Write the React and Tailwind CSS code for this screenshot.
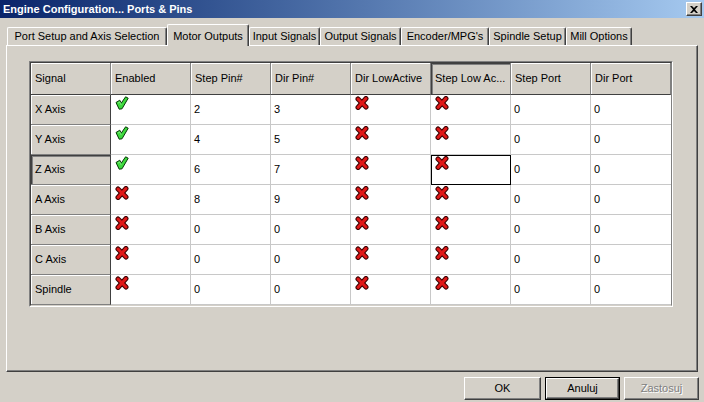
import React from "react";

const Check = () => (
  <svg width="14" height="14" viewBox="0 0 14 14">
    <path d="M1 6.5 L4.8 4.2 L6.2 7.2 L10.6 0.8 L13.2 2.2 L7 12.8 L4.2 13.2 Z" fill="#3cd83c" stroke="#063806" strokeWidth="1" strokeLinejoin="round" />
    <path d="M3 7 L5 6 L6.2 9" fill="none" stroke="#8cf08c" strokeWidth="0.8" />
  </svg>
);

const Cross = () => (
  <svg width="14" height="14" viewBox="0 0 14 14">
    <g strokeLinecap="round">
      <line x1="3" y1="3" x2="11" y2="11" stroke="#3a0000" strokeWidth="5" />
      <line x1="11" y1="2.5" x2="3" y2="11.5" stroke="#3a0000" strokeWidth="5" />
      <line x1="3" y1="3" x2="11" y2="11" stroke="#e01818" strokeWidth="3" />
      <line x1="11" y1="2.5" x2="3" y2="11.5" stroke="#e01818" strokeWidth="3" />
    </g>
  </svg>
);

const headers = ["Signal", "Enabled", "Step Pin#", "Dir Pin#", "Dir LowActive", "Step Low Ac...", "Step Port", "Dir Port"];

const rows = [
  ["X Axis", true, "2", "3"],
  ["Y Axis", true, "4", "5"],
  ["Z Axis", true, "6", "7"],
  ["A Axis", false, "8", "9"],
  ["B Axis", false, "0", "0"],
  ["C Axis", false, "0", "0"],
  ["Spindle", false, "0", "0"],
];

const tabs = [
  ["Port Setup and Axis Selection", "w-[160px]"],
  ["Motor Outputs", "w-[82px]"],
  ["Input Signals", "w-[71px]"],
  ["Output Signals", "w-[81px]"],
  ["Encoder/MPG's", "w-[88px]"],
  ["Spindle Setup", "w-[77px]"],
  ["Mill Options", "w-[66px]"],
];

function Btn({ children, def, disabled, w }) {
  const inner = (
    <div
      className={`h-full flex items-center justify-center bg-[#d4d0c8] border border-t-white border-l-white border-r-[#404040] border-b-[#404040] shadow-[inset_-1px_-1px_0_#808080] ${
        disabled ? "text-[#808080] [text-shadow:1px_1px_0_#fff]" : "text-black"
      }`}
    >
      {children}
    </div>
  );
  return <div className={`${w} h-[23px] ${def ? "border border-black" : ""}`}>{inner}</div>;
}

export default function App() {
  return (
    <div className="w-[704px] h-[402px] bg-[#d4d0c8] flex flex-col overflow-hidden font-['Liberation_Sans',Arial,sans-serif] text-[11px] text-black">
      {/* title bar */}
      <div className="h-[18px] flex items-center justify-between pl-[3px] pr-[2px] bg-linear-to-r from-[#0a246a] to-[#a6caf0]">
        <span className="text-white font-bold text-[11px] leading-none">Engine Configuration... Ports &amp; Pins</span>
        <div className="w-[16px] h-[14px] bg-[#d4d0c8] border border-t-white border-l-white border-r-[#404040] border-b-[#404040] shadow-[inset_-1px_-1px_0_#808080] flex items-center justify-center">
          <svg width="8" height="7" viewBox="0 0 8 7">
            <path d="M0 0 L2 0 L4 2 L6 0 L8 0 L5 3.5 L8 7 L6 7 L4 5 L2 7 L0 7 L3 3.5 Z" fill="#000" />
          </svg>
        </div>
      </div>

      {/* tabs */}
      <div className="mt-[6px] pl-[7px] flex items-end h-[21px]">
        {tabs.map(([t, w], i) =>
          i === 1 ? (
            <div
              key={t}
              className={`${w} h-[22px] -mb-px relative z-10 bg-[#d4d0c8] border-t border-l border-white border-r border-r-[#404040] shadow-[inset_-1px_0_0_#808080] rounded-tl-[2px] rounded-tr-[2px] flex items-start justify-center pt-[3px] whitespace-nowrap`}
            >
              {t}
            </div>
          ) : (
            <div
              key={t}
              className={`${w} h-[18px] bg-[#d4d0c8] border-t border-l border-white border-r border-r-[#404040] shadow-[inset_-1px_0_0_#808080] rounded-tl-[2px] rounded-tr-[2px] flex items-center justify-center whitespace-nowrap`}
            >
              {t}
            </div>
          )
        )}
      </div>

      {/* panel */}
      <div className="mx-[6px] h-[327px] border border-t-white border-l-white border-r-[#404040] border-b-[#404040] shadow-[inset_-1px_-1px_0_#808080] pl-[22px] pt-[15px]">
        <div className="w-fit border border-t-[#808080] border-l-[#808080] border-r-white border-b-white">
          <div className="border border-t-[#404040] border-l-[#404040] border-r-[#808080] border-b-[#d4d0c8] bg-white">
            <div className="grid grid-cols-[repeat(8,80px)]">
              {headers.map((h, i) => (
                <div
                  key={h}
                  className={`h-[32px] bg-[#d4d0c8] border-r border-r-[#808080] border-b border-b-[#404040] flex items-center pl-[4px] whitespace-nowrap overflow-hidden ${
                    i === 5
                      ? "shadow-[inset_1px_1px_0_#404040,inset_2px_2px_0_#808080]"
                      : "shadow-[inset_1px_1px_0_#fff]"
                  }`}
                >
                  {h}
                </div>
              ))}
              {rows.map(([name, en, sp, dp], r) => (
                <React.Fragment key={name}>
                  <div
                    className={`h-[30px] bg-[#d4d0c8] border-r border-r-[#404040] border-b border-b-[#808080] flex items-center pl-[4px] ${
                      r === 2
                        ? "shadow-[inset_1px_1px_0_#404040,inset_2px_2px_0_#808080]"
                        : "shadow-[inset_1px_1px_0_#fff]"
                    }`}
                  >
                    {name}
                  </div>
                  <div className="h-[30px] border-r border-b border-[#c8c8c8] pl-[4px] pt-[1px]">
                    {en ? <Check /> : <Cross />}
                  </div>
                  <div className="h-[30px] border-r border-b border-[#c8c8c8] flex items-center pl-[3px]">{sp}</div>
                  <div className="h-[30px] border-r border-b border-[#c8c8c8] flex items-center pl-[3px]">{dp}</div>
                  <div className="h-[30px] border-r border-b border-[#c8c8c8] pl-[4px] pt-[1px]">
                    <Cross />
                  </div>
                  <div
                    className={`h-[30px] border-r border-b pl-[4px] pt-[1px] ${
                      r === 2 ? "border-black shadow-[inset_1px_1px_0_#000]" : "border-[#c8c8c8]"
                    }`}
                  >
                    <Cross />
                  </div>
                  <div className="h-[30px] border-r border-b border-[#c8c8c8] flex items-center pl-[3px]">0</div>
                  <div className="h-[30px] border-b border-[#c8c8c8] flex items-center pl-[3px]">0</div>
                </React.Fragment>
              ))}
            </div>
          </div>
        </div>
      </div>

      {/* buttons */}
      <div className="mt-[5px] flex justify-end gap-[4px] pr-[5px]">
        <Btn w="w-[77px]">OK</Btn>
        <Btn w="w-[75px]" def>
          Anuluj
        </Btn>
        <Btn w="w-[75px]" disabled>
          Zastosuj
        </Btn>
      </div>
    </div>
  );
}
